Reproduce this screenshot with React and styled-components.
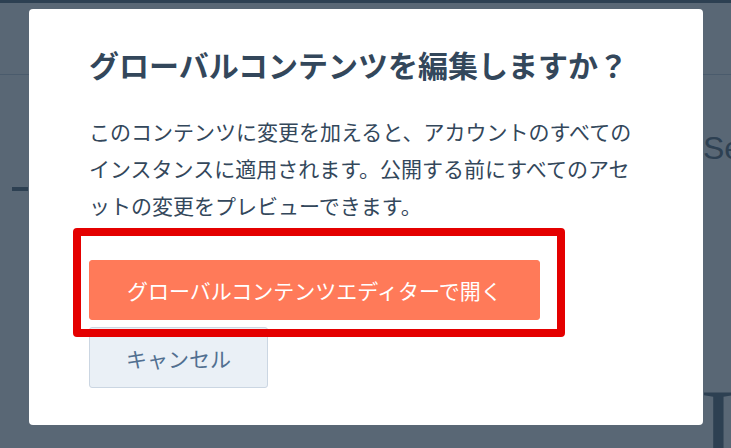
import React from 'react';
import styled, { createGlobalStyle } from 'styled-components';

const GlobalStyle = createGlobalStyle`
  html, body {
    margin: 0;
    padding: 0;
    width: 731px;
    height: 448px;
    overflow: hidden;
  }
  body {
    font-family: "Noto Sans CJK JP", "Noto Sans", sans-serif;
  }
  * {
    box-sizing: border-box;
  }
`;

const App = () => {
  return (
    <Screen>
      <GlobalStyle />
      <Page>
        <NavStrip />
        <PageHeader />
        <PageBody>
          <SideRule />
          <RightColumn>
            <SectionText>Se</SectionText>
            <BigLetter>I</BigLetter>
          </RightColumn>
        </PageBody>
      </Page>

      <Overlay>
        <Modal role="dialog">
          <Title>グローバルコンテンツを編集しますか？</Title>
          <Body>
            このコンテンツに変更を加えると、アカウントのすべてのインスタンスに適用されます。公開する前にすべてのアセットの変更をプレビューできます。
          </Body>
          <Actions>
            <Highlighted>
              <PrimaryButton type="button">グローバルコンテンツエディターで開く</PrimaryButton>
              <RedFrame />
            </Highlighted>
            <CancelButton type="button">キャンセル</CancelButton>
          </Actions>
        </Modal>
      </Overlay>
    </Screen>
  );
};

const Screen = styled.div`
  position: relative;
  width: 731px;
  height: 448px;
  overflow: hidden;
  background-color: #ffffff;
`;

const Page = styled.div`
  display: flex;
  flex-direction: column;
  height: 100%;
`;

const NavStrip = styled.div`
  flex-shrink: 0;
  height: 3px;
  background-color: #33475b;
`;

const PageHeader = styled.div`
  flex-shrink: 0;
  height: 72px;
  border-bottom: 1px solid #b8c4d2;
`;

const PageBody = styled.div`
  flex: 1;
  min-height: 0;
  overflow: hidden;
  display: flex;
  justify-content: space-between;
`;

const SideRule = styled.div`
  flex-shrink: 0;
  width: 16px;
  height: 4px;
  margin: 112px 0 0 12px;
  background-color: #33475b;
`;

const RightColumn = styled.div`
  flex-shrink: 0;
  width: 28px;
  display: flex;
  flex-direction: column;
`;

const SectionText = styled.div`
  flex-shrink: 0;
  margin-top: 57px;
  font-family: "Liberation Sans", Arial, sans-serif;
  font-size: 32px;
  line-height: 1;
  color: #33475b;
  white-space: nowrap;
`;

const BigLetter = styled.div`
  flex-shrink: 0;
  margin: 209px 0 0 -3px;
  font-family: "Liberation Serif", "Times New Roman", serif;
  font-size: 110px;
  line-height: 1;
  color: #33475b;
`;

const Overlay = styled.div`
  position: absolute;
  inset: 0;
  padding: 9px 28px 0 29px;
  background-color: rgba(45, 62, 80, 0.79);
`;

const Modal = styled.div`
  width: 674px;
  height: 416px;
  padding: 36px 60px 37px;
  display: flex;
  flex-direction: column;
  background-color: #ffffff;
  border-radius: 4px;
`;

const Title = styled.h3`
  margin: 0;
  font-size: 30px;
  font-weight: 700;
  line-height: 38px;
  color: #33475b;
  white-space: nowrap;
`;

const Body = styled.p`
  margin: 30px 0 0;
  font-size: 21px;
  line-height: 37px;
  color: #33475b;
  line-break: normal;
`;

const Actions = styled.div`
  margin-top: 36px;
  display: flex;
  flex-direction: column;
  align-items: flex-start;
  gap: 7px;
`;

const Highlighted = styled.div`
  position: relative;
  z-index: 1;
`;

const RedFrame = styled.div`
  position: absolute;
  top: -32px;
  left: -16px;
  right: -25px;
  bottom: -17px;
  border: 8px solid #e40000;
  border-radius: 4px;
  pointer-events: none;
`;

const PrimaryButton = styled.button`
  height: 60px;
  padding: 0 37px;
  font-family: inherit;
  font-size: 21px;
  color: #ffffff;
  background-color: #ff7a59;
  border: 1px solid #ff7a59;
  border-radius: 3px;
  cursor: pointer;
`;

const CancelButton = styled.button`
  height: 61px;
  padding: 0 36px;
  font-family: inherit;
  font-size: 21px;
  color: #516f90;
  background-color: #eaf0f6;
  border: 1px solid #cbd6e2;
  border-radius: 3px;
  cursor: pointer;
`;

export default App;
